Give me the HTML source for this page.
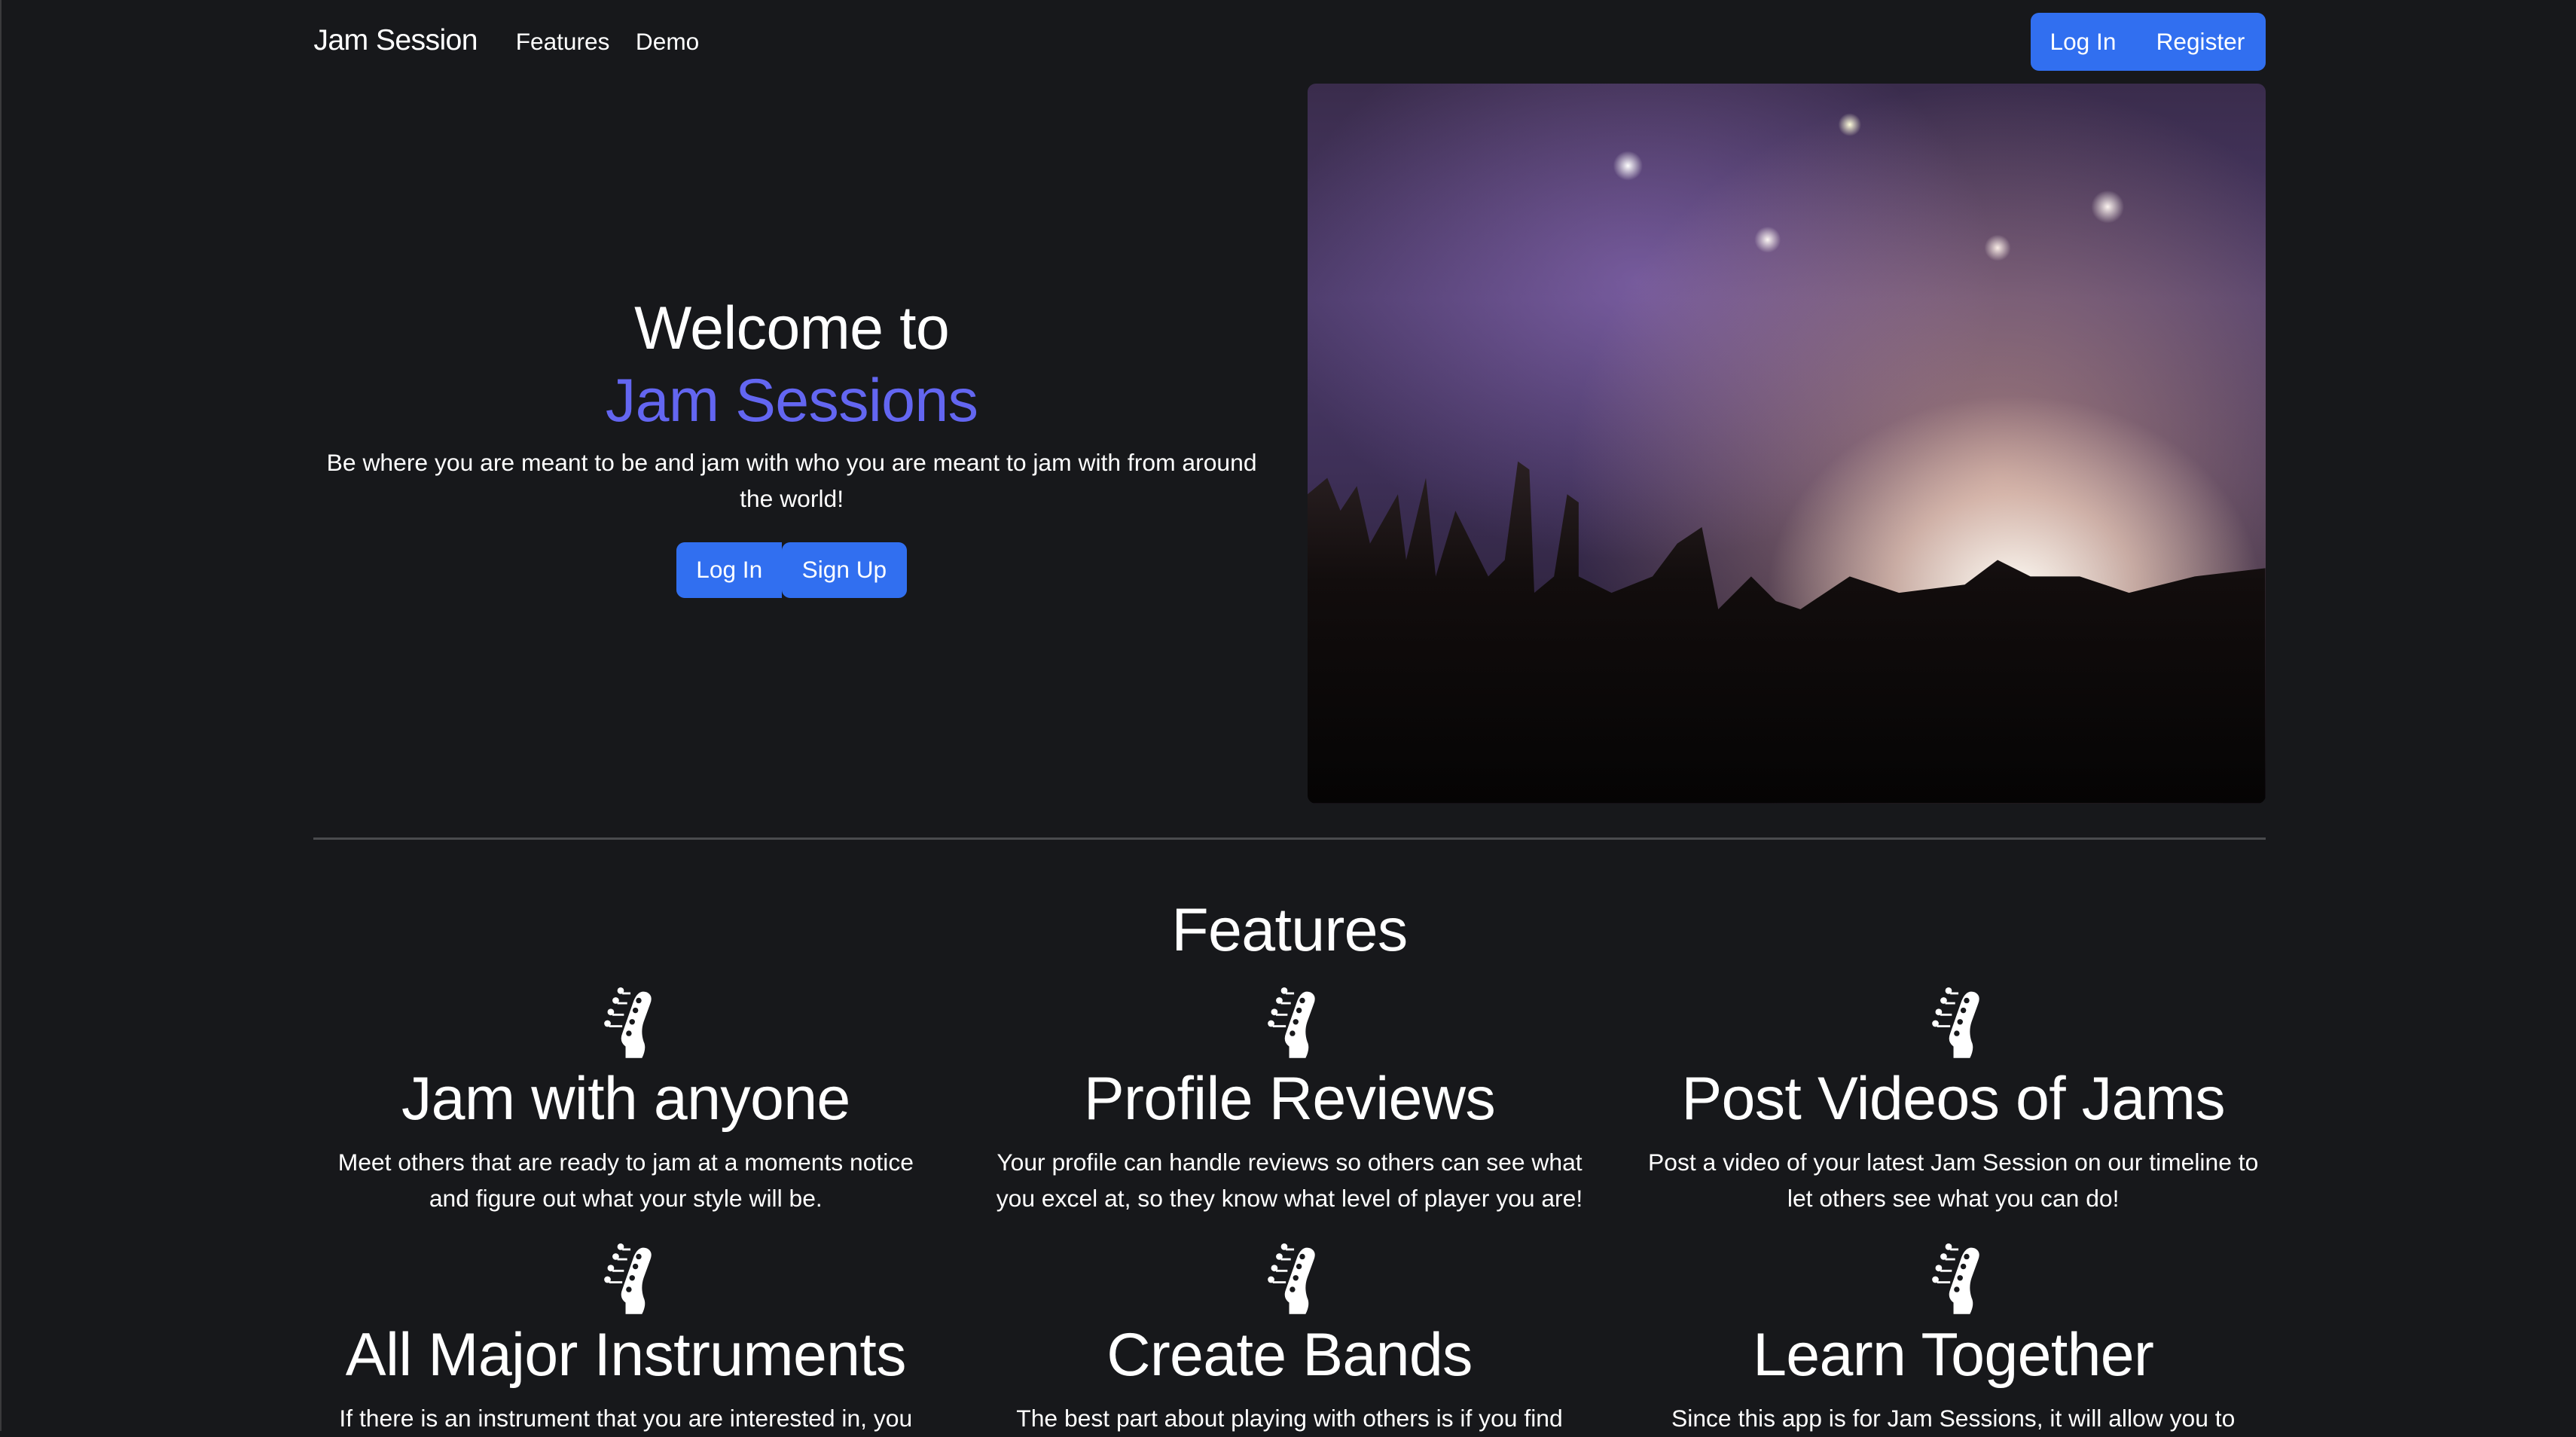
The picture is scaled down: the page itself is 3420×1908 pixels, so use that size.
<!DOCTYPE html>
<html><head><meta charset="utf-8"><style>
html{zoom:2.18112}
*{box-sizing:border-box;margin:0;padding:0}
body{width:1568px;height:871px;background:#17181b;color:#fff;font-family:"Liberation Sans",sans-serif;position:relative;overflow:hidden;border-left:1px solid #3a3a3c}
.a{position:absolute;white-space:nowrap}
.c{text-align:center;transform:translateX(-50%)}
.btn{position:absolute;background:#316ff0;color:#fff;font-size:14.5px;display:flex;align-items:center;justify-content:center;border-radius:5px}
.t{font-size:37px;letter-spacing:-.3px;line-height:36px}
.p{font-size:14.6px;line-height:22px;white-space:normal}
.img{position:absolute;left:795px;top:51px;width:583px;height:438px;border-radius:5px;overflow:hidden;
background:
radial-gradient(ellipse 150px 120px at 430px 310px,rgba(255,252,245,1),rgba(255,225,205,.6) 50%,transparent 100%),
radial-gradient(ellipse 260px 240px at 420px 240px,rgba(235,180,150,.55),transparent 100%),
radial-gradient(circle 9px at 195px 50px,#fff,transparent),
radial-gradient(circle 8px at 420px 100px,#fff,transparent),
radial-gradient(circle 10px at 487px 75px,#fff,transparent),
radial-gradient(circle 7px at 330px 25px,#ffd,transparent),
radial-gradient(circle 8px at 280px 95px,#fff,transparent),
radial-gradient(ellipse 220px 170px at 200px 120px,rgba(170,130,220,.45),transparent),
linear-gradient(180deg,#3a2c4c 0%,#4c3b6a 30%,#3d2f56 55%,#1d1620 100%);}
</style></head><body>
<div class="a" style="left:190px;top:14px;font-size:18px;letter-spacing:-.3px">Jam Session</div>
<div class="a" style="left:313px;top:17px;font-size:14.5px">Features</div>
<div class="a" style="left:386px;top:17px;font-size:14.5px">Demo</div>
<div class="btn" style="left:1235px;top:8px;width:64px;height:35px;border-radius:5px 0 0 5px">Log In</div>
<div class="btn" style="left:1299px;top:8px;width:79px;height:35px;border-radius:0 5px 5px 0">Register</div>

<div class="img"><svg viewBox="0 0 583 438" style="position:absolute;top:0;left:0;width:583px;height:438px">
<defs><linearGradient id="g" x1="0" y1="0" x2="0" y2="1"><stop offset="0" stop-color="#2a2022"/><stop offset=".35" stop-color="#120d0d"/><stop offset="1" stop-color="#050404"/></linearGradient></defs>
<path fill="url(#g)" d="M0 250 L12 240 L20 260 L30 245 L38 280 L55 250 L60 290 L72 240 L78 300 L90 260 L110 300 L120 290 L128 230 L135 235 L138 310 L150 300 L158 250 L165 255 L165 300 L185 310 L210 300 L225 280 L240 270 L250 320 L270 300 L285 315 L300 320 L330 300 L360 310 L400 305 L420 290 L440 300 L470 300 L500 310 L540 300 L583 295 L583 438 L0 438Z"/>
</svg></div>

<div class="a c" style="left:481px;top:179px;font-size:37px;letter-spacing:-.3px">Welcome to</div>
<div class="a c" style="left:481px;top:223px;font-size:37px;letter-spacing:-.3px;color:#6366f1">Jam Sessions</div>
<div class="a c p" style="left:481px;top:271px;width:582px">Be where you are meant to be and jam with who you are meant to jam with from around the world!</div>
<div class="btn" style="left:411px;top:330px;width:64px;height:34px;border-radius:5px 0 0 5px">Log In</div>
<div class="btn" style="left:475px;top:330px;width:76px;height:34px">Sign Up</div>

<div class="a" style="left:190px;top:510px;width:1188px;height:1px;background:#4a4b4e"></div>
<div class="a c" style="left:784px;top:545px;font-size:37px;letter-spacing:-.3px">Features</div>

<svg width="0" height="0" style="position:absolute"><defs><g id="ic" fill="#fff">
<path d="M14 43 L14 36 Q10 33 12 28 L19 8 Q22 1 27 3 Q31 5 29 10 L25 21 Q23 27 25 33 Q27 37 24 43Z"/>
<circle cx="11" cy="2" r="2"/><circle cx="8" cy="8" r="2"/><circle cx="5" cy="15" r="2"/><circle cx="3" cy="22" r="2"/>
<rect x="12" y="3" width="5" height="1.3"/><rect x="9" y="9" width="6" height="1.3"/><rect x="6" y="16" width="7" height="1.3"/><rect x="4" y="23" width="8" height="1.3"/>
<circle cx="22" cy="8" r="1.7" fill="#17181b"/><circle cx="20" cy="14" r="1.7" fill="#17181b"/><circle cx="18" cy="21" r="1.7" fill="#17181b"/><circle cx="16" cy="28" r="1.7" fill="#17181b"/>
</g></defs></svg>

<svg class="a" style="left:366px;top:601px" width="32" height="43"><use href="#ic"/></svg>
<svg class="a" style="left:770px;top:601px" width="32" height="43"><use href="#ic"/></svg>
<svg class="a" style="left:1174px;top:601px" width="32" height="43"><use href="#ic"/></svg>
<div class="a c t" style="left:380px;top:651px">Jam with anyone</div>
<div class="a c t" style="left:784px;top:651px">Profile Reviews</div>
<div class="a c t" style="left:1188px;top:651px">Post Videos of Jams</div>
<div class="a c p" style="left:380px;top:697px;width:362px">Meet others that are ready to jam at a moments notice and figure out what your style will be.</div>
<div class="a c p" style="left:784px;top:697px;width:366px">Your profile can handle reviews so others can see what you excel at, so they know what level of player you are!</div>
<div class="a c p" style="left:1188px;top:697px;width:380px">Post a video of your latest Jam Session on our timeline to let others see what you can do!</div>

<svg class="a" style="left:366px;top:757px" width="32" height="43"><use href="#ic"/></svg>
<svg class="a" style="left:770px;top:757px" width="32" height="43"><use href="#ic"/></svg>
<svg class="a" style="left:1174px;top:757px" width="32" height="43"><use href="#ic"/></svg>
<div class="a c t" style="left:380px;top:807px">All Major Instruments</div>
<div class="a c t" style="left:784px;top:807px">Create Bands</div>
<div class="a c t" style="left:1188px;top:807px">Learn Together</div>
<div class="a c p" style="left:380px;top:853px;width:370px">If there is an instrument that you are interested in, you</div>
<div class="a c p" style="left:784px;top:853px;width:380px">The best part about playing with others is if you find</div>
<div class="a c p" style="left:1188px;top:853px;width:390px">Since this app is for Jam Sessions, it will allow you to</div>
</body></html>
